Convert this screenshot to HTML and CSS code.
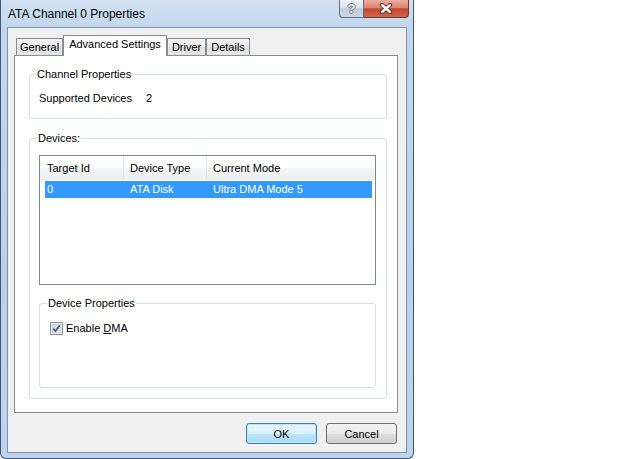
FILE: index.html
```html
<!DOCTYPE html>
<html lang="en">
<head>
	<meta charset="UTF-8">
	<title>ATA Channel 0 Properties</title>
	<link rel="stylesheet" href="styles.css">
</head>
<body>
	<div class="window">
		<div class="titlebar">
			<span class="title">ATA Channel 0 Properties</span>
			<div class="caption-btns">
				<span class="cap-btn help">?</span>
				<span class="cap-btn close">
					<svg width="14" height="11" viewBox="0 0 14 11">
						<path d="M3 2 L11 9 M11 2 L3 9" stroke="#5a2219" stroke-width="4.2" stroke-linecap="round" fill="none"/>
						<path d="M3 2 L11 9 M11 2 L3 9" stroke="#fff" stroke-width="2.4" stroke-linecap="round" fill="none"/>
					</svg>
				</span>
			</div>
		</div>
		<div class="client">
			<ul class="tabs">
				<li>General</li>
				<li class="active">Advanced Settings</li>
				<li>Driver</li>
				<li>Details</li>
			</ul>
			<div class="page">
				<fieldset class="group channel">
					<legend>Channel Properties</legend>
					<div class="prop"><span class="prop-name">Supported Devices</span><span>2</span></div>
				</fieldset>
				<fieldset class="group devices">
					<legend>Devices:</legend>
					<div class="listview">
						<div class="lv-head">
							<span>Target Id</span>
							<span>Device Type</span>
							<span>Current Mode</span>
						</div>
						<div class="lv-row selected">
							<span>0</span>
							<span>ATA Disk</span>
							<span>Ultra DMA Mode 5</span>
						</div>
					</div>
					<fieldset class="group inner">
						<legend>Device Properties</legend>
						<label class="check">
							<svg class="box" width="13" height="13" viewBox="0 0 13 13">
								<defs>
									<linearGradient id="cb" x1="0" y1="0" x2="1" y2="1">
										<stop offset="0" stop-color="#cfd3d8"/>
										<stop offset="1" stop-color="#f7f8f9"/>
									</linearGradient>
								</defs>
								<rect x="0.5" y="0.5" width="12" height="12" fill="#fff" stroke="#8f8f8f"/>
								<rect x="2" y="2" width="9" height="9" fill="url(#cb)" stroke="#b5b9be" stroke-width="0.6"/>
								<path d="M3.2 6.6 L5.4 9 L9.8 3.4" stroke="#4b5d86" stroke-width="1.8" fill="none"/>
							</svg>
							<span>Enable <u>D</u>MA</span>
						</label>
					</fieldset>
				</fieldset>
			</div>
			<div class="buttons">
				<button class="btn default">OK</button>
				<button class="btn">Cancel</button>
			</div>
		</div>
	</div>
</body>
</html>
```

FILE: styles.css
```css
body{
	margin: 0;
	background: #fff;
	font-family: "Liberation Sans", Arial, sans-serif;
	font-size: 11px;
	color: #000;
}
.window{
	width: 414px;
	height: 459px;
	box-sizing: border-box;
	border: 1px solid #3f5773;
	border-top: none;
	border-radius: 0 0 6px 6px;
	padding: 0 6px 5px 6px;
	background: linear-gradient(to bottom, #d2e1f1 0px, #c2d7ee 26px, #b9d1eb 60%, #bdd4ec 100%);
	display: flex;
	flex-direction: column;
}
	.titlebar{
		height: 27px;
		display: flex;
		align-items: flex-start;
		flex-shrink: 0;
	}
	.title{
		font-size: 12px;
		line-height: 14px;
		margin: 7px 0 0 1px;
	}
	.caption-btns{
		display: flex;
		margin-left: auto;
		margin-right: -2px;
	}
	.cap-btn{
		display: flex;
		align-items: center;
		justify-content: center;
		height: 17px;
		border: 1px solid #5f6f82;
		border-top: none;
	}
	.help{
		width: 23px;
		border-radius: 0 0 0 4px;
		background: linear-gradient(to bottom, #eef3f8 0%, #d9e2eb 45%, #bfcbd8 52%, #cdd8e4 100%);
		color: #f4f6f8;
		font-size: 13px;
		font-weight: bold;
		text-shadow: 1px 0 0 #6c7886, -1px 0 0 #6c7886, 0 1px 0 #6c7886, 0 -1px 0 #6c7886;
	}
	.close{
		width: 44px;
		border-left: none;
		border-color: #6b3a33;
		border-radius: 0 0 4px 0;
		background: linear-gradient(to bottom, #e9ad9f 0%, #d98470 45%, #c4452e 52%, #d1654f 100%);
	}

.client{
	flex: 1;
	background: #f0f0f0;
	border: 1px solid #7e93ab;
	padding: 7px 8px 8px 6px;
	display: flex;
	flex-direction: column;
}
	.tabs{
		list-style: none;
		margin: 0;
		padding: 0 0 0 2px;
		display: flex;
		align-items: flex-end;
	}
	.tabs li{
		height: 16px;
		line-height: 16px;
		padding: 0 4px;
		border: 1px solid #898c95;
		border-bottom: none;
		background: linear-gradient(to bottom, #f3f3f3 0%, #ebebeb 50%, #dedede 51%, #e6e6e6 100%);
	}
	.tabs li:first-child{
		padding: 0 3px;
	}
	.tabs li.active{
		position: relative;
		z-index: 1;
		height: 20px;
		line-height: 17px;
		padding: 0 5px;
		margin-bottom: -1px;
		background: #fff;
	}
	.page{
		height: 358px;
		box-sizing: border-box;
		border: 1px solid #898c95;
		background: #fff;
		padding-top: 12px;
	}

.group{
	border: 1px solid #d5dfe5;
	border-radius: 3px;
	margin: 0 10px 0 14px;
	min-width: 0;
}
	.group legend{
		padding: 0 1px;
		line-height: 13px;
	}
	.channel{
		padding: 11px 10px 13px 6px;
	}
	.prop{
		line-height: 13px;
		padding-left: 3px;
	}
	.prop-name{
		display: inline-block;
		width: 107px;
	}
	.devices{
		margin-top: 13px;
		padding: 10px 10px 10px 7px;
	}
	.inner{
		margin: 12px 0 0 2px;
		padding: 12px 10px 52px 7px;
	}

.listview{
	margin-left: 2px;
	height: 130px;
	box-sizing: border-box;
	border: 1px solid #828790;
	background: #fff;
}
	.lv-head{
		display: grid;
		grid-template-columns: 84px 83px 1fr;
		height: 24px;
		line-height: 24px;
		background: linear-gradient(to bottom, #fff 0%, #fff 50%, #f4f5f7 51%, #eceef1 100%);
	}
	.lv-head span{
		border-right: 1px solid #dfe2e6;
		padding-left: 6px;
	}
	.lv-head span:first-child{
		padding-left: 7px;
	}
	.lv-head span:last-child{
		border-right: none;
	}
	.lv-row{
		display: grid;
		grid-template-columns: 83px 83px 1fr;
		margin: 1px 3px 0 5px;
		height: 17px;
		line-height: 17px;
	}
	.lv-row span{
		padding-left: 2px;
	}
	.lv-row.selected{
		background: #3399ff;
		color: #fff;
	}

.check{
	display: flex;
	align-items: center;
	gap: 3px;
	margin-left: 3px;
	line-height: 13px;
}
	.check u{
		text-decoration-thickness: 1px;
	}

.buttons{
	display: flex;
	justify-content: flex-end;
	gap: 9px;
	margin-top: 10px;
	padding-right: 1px;
}
	.btn{
		width: 71px;
		height: 21px;
		padding: 0;
		font-family: "Liberation Sans", Arial, sans-serif;
		font-size: 11px;
		color: #000;
		border: 1px solid #707070;
		border-radius: 3px;
		background: linear-gradient(to bottom, #f2f2f2 0%, #ebebeb 50%, #dddddd 51%, #cfcfcf 100%);
	}
	.btn.default{
		border-color: #3c7fb1;
		box-shadow: inset 0 0 0 1px #bde6fd;
		background: linear-gradient(to bottom, #eaf6fd 0%, #d9f0fc 50%, #bee6fd 51%, #a7d9f5 100%);
	}
```
